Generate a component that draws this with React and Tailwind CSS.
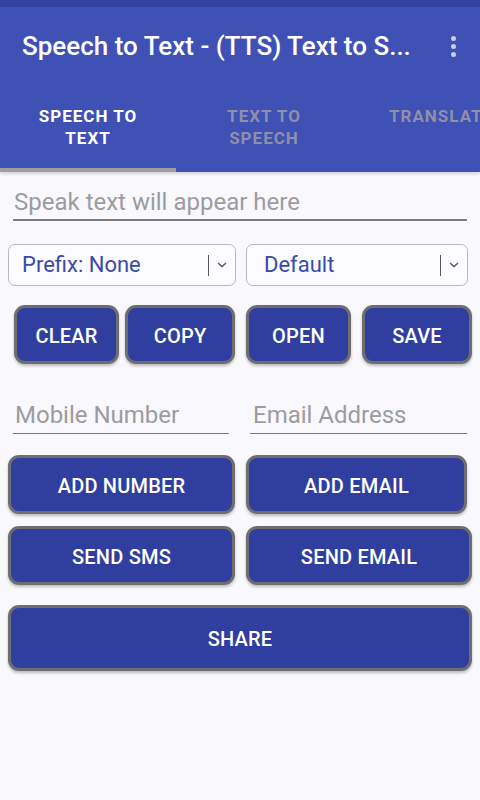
import React from "react";

function Chevron() {
  return (
    <svg width="10" height="6" viewBox="0 0 10 6" className="block">
      <path d="M1 1 L5 4.5 L9 1" fill="none" stroke="#555" strokeWidth="1.4" />
    </svg>
  );
}

function Spinner({ label, w, textPl }) {
  return (
    <div className={`${w} h-[42px] border border-[#b9b9bd] rounded-[7px] bg-[#fcfbfe] flex items-center`}>
      <span className={`${textPl} text-[22px] text-[#3a4aa8] flex-1 leading-none`}>{label}</span>
      <div className="w-px h-[21px] bg-[#555] mr-[8px]"></div>
      <div className="mr-[8px]"><Chevron /></div>
    </div>
  );
}

function Btn({ label, w, h }) {
  return (
    <div
      className={`${w} ${h} rounded-[11px] border-[3px] border-[#6e6e70] bg-[#303f9f] flex items-center justify-center pt-[2px] text-white text-[20px] font-medium tracking-[0.2px] shadow-[0_2px_3px_rgba(0,0,0,0.25)]`}
    >
      {label}
    </div>
  );
}

export default function App() {
  return (
    <div className="w-[480px] h-[800px] bg-[#f9f8fc] font-['Roboto',sans-serif] overflow-hidden">
      <div className="h-[7px] bg-[#3443a3]"></div>
      <div className="bg-[#3f51b5] shadow-[0_2px_3px_rgba(0,0,0,0.15)]">
        <div className="h-[83px] flex items-center pl-[22px] pr-[24px]">
          <span className="text-white text-[26px] font-medium flex-1 whitespace-nowrap leading-none -mt-[6px]">
            Speech to Text - (TTS) Text to S...
          </span>
          <div className="flex flex-col gap-[3px] -mt-[4px]">
            <div className="w-[5px] h-[5px] rounded-full bg-[#c9cdf0]"></div>
            <div className="w-[5px] h-[5px] rounded-full bg-[#c9cdf0]"></div>
            <div className="w-[5px] h-[5px] rounded-full bg-[#c9cdf0]"></div>
          </div>
        </div>
        <div className="flex h-[82px]">
          <div className="w-[176px] flex flex-col">
            <div className="flex-1 flex items-start justify-center pt-[15px]">
              <span className="text-white text-[17px] font-bold leading-[22px] tracking-[1px] text-center">
                SPEECH TO<br />TEXT
              </span>
            </div>
            <div className="h-[4px] bg-[#9e9e9e]"></div>
          </div>
          <div className="w-[176px] flex items-start justify-center pt-[15px]">
            <span className="text-[#8e8fa8] text-[17px] font-bold leading-[22px] tracking-[1px] text-center">
              TEXT TO<br />SPEECH
            </span>
          </div>
          <div className="w-[128px] pt-[15px] pl-[37px] overflow-hidden">
            <span className="text-[#8e8fa8] text-[17px] font-bold leading-[22px] tracking-[1px] whitespace-nowrap">
              TRANSLATE
            </span>
          </div>
        </div>
      </div>

      <div className="px-[13px] pt-[15px]">
        <div className="w-[454px] border-b-2 border-[#7a7a7e] pb-[2px]">
          <span className="pl-[1px] text-[24px] text-[#9c9ca0] leading-[30px]">Speak text will appear here</span>
        </div>
      </div>

      <div className="flex pl-[8px] gap-[10px] mt-[23px]">
        <Spinner label="Prefix: None" w="w-[228px]" textPl="pl-[13px]" />
        <Spinner label="Default" w="w-[222px]" textPl="pl-[17px]" />
      </div>

      <div className="flex pl-[14px] mt-[19px]">
        <Btn label="CLEAR" w="w-[105px]" h="h-[59px]" />
        <div className="w-[6px]"></div>
        <Btn label="COPY" w="w-[110px]" h="h-[59px]" />
        <div className="w-[11px]"></div>
        <Btn label="OPEN" w="w-[105px]" h="h-[59px]" />
        <div className="w-[11px]"></div>
        <Btn label="SAVE" w="w-[110px]" h="h-[59px]" />
      </div>

      <div className="flex pl-[13px] mt-[36px]">
        <div className="w-[216px] border-b border-[#7a7a7e] pb-[3px]">
          <span className="pl-[2px] text-[24px] text-[#9c9ca0] leading-[30px]">Mobile Number</span>
        </div>
        <div className="w-[21px]"></div>
        <div className="w-[217px] border-b border-[#7a7a7e] pb-[3px]">
          <span className="pl-[3px] text-[24px] text-[#9c9ca0] leading-[30px]">Email Address</span>
        </div>
      </div>

      <div className="flex pl-[8px] mt-[21px]">
        <Btn label="ADD NUMBER" w="w-[227px]" h="h-[59px]" />
        <div className="w-[11px]"></div>
        <Btn label="ADD EMAIL" w="w-[221px]" h="h-[59px]" />
      </div>

      <div className="flex pl-[8px] mt-[12px]">
        <Btn label="SEND SMS" w="w-[227px]" h="h-[59px]" />
        <div className="w-[11px]"></div>
        <Btn label="SEND EMAIL" w="w-[226px]" h="h-[59px]" />
      </div>

      <div className="flex pl-[8px] mt-[20px]">
        <Btn label="SHARE" w="w-[464px]" h="h-[66px]" />
      </div>
    </div>
  );
}
